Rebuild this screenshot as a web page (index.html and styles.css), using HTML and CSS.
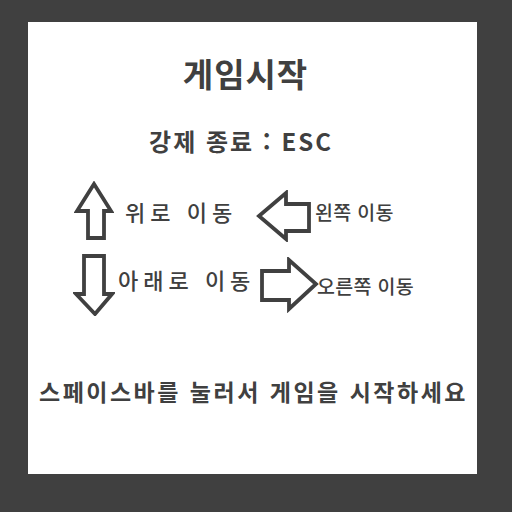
FILE: index.html
```html
<!DOCTYPE html>
<html lang="ko">
<head>
<meta charset="utf-8">
<link rel="stylesheet" href="styles.css">
</head>
<body>
<div class="panel">
  <h1 class="title">게임시작</h1>
  <p class="sub">강제 종료 : ESC</p>
  <div class="controls">
    <div class="ctl ctl-up">
      <svg class="arrow arrow-up" width="40" height="60" viewBox="0 0 40 60"><polygon points="20,3 37,30 30,30 30,57 14,57 14,30 3,30" /></svg>
      <span class="lbl lbl-big">위로 이동</span>
    </div>
    <div class="ctl ctl-left">
      <svg class="arrow arrow-left" width="56" height="52" viewBox="0 0 56 52"><polygon points="3,26 30,3 30,14 53,14 53,41 30,41 30,49" /></svg>
      <span class="lbl lbl-small">왼쪽 이동</span>
    </div>
    <div class="ctl ctl-down">
      <svg class="arrow arrow-down" width="42" height="62" viewBox="0 0 42 62"><polygon points="11,2 31,2 31,40 39,40 22,60 3,40 11,40" /></svg>
      <span class="lbl lbl-big">아래로 이동</span>
    </div>
    <div class="ctl ctl-right">
      <svg class="arrow arrow-right" width="60" height="56" viewBox="0 0 60 56"><polygon points="3,14 30,14 30,3 57,27 30,52 30,43 3,43" /></svg>
      <span class="lbl lbl-small">오른쪽 이동</span>
    </div>
  </div>
  <p class="hint">스페이스바를 눌러서 게임을 시작하세요</p>
</div>
</body>
</html>
```

FILE: styles.css
```css
html, body {
  margin: 0;
  padding: 0;
  background: #404040;
}
body {
  width: 512px;
  height: 512px;
  font-family: "Noto Sans CJK KR", "Noto Sans", sans-serif;
  color: #404040;
}
.panel {
  margin: 22px 0 0 28px;
  width: 449px;
  height: 452px;
  background: #ffffff;
  display: flex;
  flex-direction: column;
  overflow: hidden;
}
.title {
  margin: 32px 0 0 0;
  padding-right: 14px;
  font-size: 33px;
  line-height: 38px;
  font-weight: 700;
  text-align: center;
  letter-spacing: 1px;
}
.sub {
  margin: 35px 0 0 0;
  padding-right: 23px;
  font-size: 24px;
  line-height: 28px;
  font-weight: 700;
  text-align: center;
  letter-spacing: 2px;
}
.controls {
  margin-top: 25px;
  padding-left: 45px;
  display: grid;
  grid-template-columns: 182px auto;
  grid-auto-rows: 62px;
  row-gap: 12px;
}
.ctl {
  display: flex;
  align-items: center;
}
.arrow {
  display: block;
  flex: none;
}
.arrow polygon {
  fill: none;
  stroke: #404040;
  stroke-width: 3.8;
  stroke-linejoin: miter;
}
.arrow-up { margin: 0 11px 0 1px; }
.arrow-left { margin: 10px 3px 0 1px; }
.arrow-down { margin: 0 3px 0 0; }
.arrow-right { margin: 0 -2px 0 4px; }
.lbl {
  white-space: nowrap;
  font-weight: 500;
}
.lbl-big {
  font-size: 22px;
  letter-spacing: 5px;
}
.lbl-small {
  font-size: 19.5px;
  letter-spacing: 0.3px;
}
.ctl-down .lbl { margin-bottom: 12px; }
.hint {
  margin: 61px 0 0 0;
  font-size: 23px;
  line-height: 28px;
  font-weight: 700;
  text-align: center;
  letter-spacing: 2.5px;
  padding-left: 2px;
}
```
